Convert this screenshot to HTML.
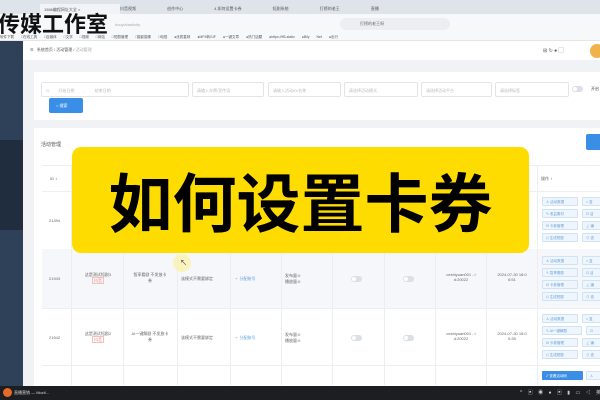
<!DOCTYPE html>
<html><head><meta charset="utf-8"><style>
*{margin:0;padding:0;box-sizing:border-box}
body{width:600px;height:400px;overflow:hidden;position:relative;background:#f0f2f5;font-family:"Liberation Sans","Noto Sans CJK SC",sans-serif;font-size:4px;color:#666}
.a{position:absolute}
.t{white-space:nowrap}
.inp{position:absolute;top:82px;height:15px;border:1px solid #e2e4e8;background:#fff;border-radius:2px;color:#bbb;font-size:4px;padding:5px 4px}
.btn{position:absolute;height:9px;border:1px solid #cfe3f6;background:#eef5fd;color:#6a9fd8;font-size:3.5px;padding:2px 3px;border-radius:1px}
.sw{position:absolute;width:11px;height:6px;border-radius:3px;background:#dcdfe6}
.sw:after{content:"";position:absolute;left:1px;top:1px;width:4px;height:4px;border-radius:50%;background:#fff}
.vl{position:absolute;top:165px;height:220px;width:1px;background:#eceef2}
</style></head><body>
<div class="a" style="left:0;top:0;width:600px;height:14px;background:#dfe3ea"></div>
<div class="a t" style="left:40px;top:4px;width:80px;height:10px;background:#f1f3f6;font-size:4px;color:#555;padding:3px 4px">1566编程网址大全 ×</div>
<div class="a t" style="left:120px;top:6px;font-size:4px;color:#555;word-spacing:30px">抖音视频 创作中心 4.如何设置卡券 短剧系统 打榜的老王 直播</div>
<div class="a" style="left:0;top:14px;width:600px;height:20px;background:#f7f8fa"></div>
<div class="a" style="left:340px;top:18px;width:110px;height:12px;background:#eceef1;border-radius:6px"></div>
<div class="a t" style="left:360px;top:21px;font-size:4px;color:#666">打榜的老王呀</div>
<div class="a t" style="left:115px;top:22px;font-size:4px;color:#aaa">douyin/activity</div>
<div class="a" style="left:0;top:34px;width:600px;height:7px;background:#f7f8fa;border-bottom:1px solid #e5e5e5"></div>
<div class="a t" style="left:0;top:35px;font-size:3.5px;color:#555;word-spacing:6px">软件下载 □在线工具 □自媒体 □文学 □视频 □网站 □短剧管理 □摄影摄像 □电视 ●优质星球 ●MP4转GIF ●一键文章 ●热门话题 ●https://ff3-static ●Bily Net ●出行</div>
<div class="a t" style="left:-2px;top:7px;font-size:22px;color:#111;font-weight:bold">传媒工作室</div>
<div class="a" style="left:0;top:41px;width:23px;height:346px;background:#2f4159"></div>
<div class="a" style="left:0;top:140px;width:23px;height:90px;background:#1f2d3f"></div>
<div class="a" style="left:23px;top:41px;width:577px;height:19px;background:#fff"></div>
<div class="a t" style="left:30px;top:47px;font-size:4px;color:#555">☰ &nbsp; 系统首页 / 活动管理 / <span style="color:#aaa">活动管理</span></div>
<div class="a t" style="left:543px;top:47px;font-size:5px;color:#555">⊞ ↻ ● ▢</div>
<div class="a" style="left:590px;top:44px;width:14px;height:14px;border-radius:50%;background:#f0b34a"></div>
<div class="a" style="left:34px;top:72px;width:570px;height:48px;background:#fff"></div>
<div class="inp t" style="left:41px;width:148px">◷ &nbsp;&nbsp;&nbsp;&nbsp;&nbsp;&nbsp; 开始日期 &nbsp;&nbsp;&nbsp;&nbsp;&nbsp;&nbsp; - &nbsp;&nbsp;&nbsp;&nbsp;&nbsp;&nbsp;&nbsp; 结束日期</div>
<div class="inp t" style="left:192px;width:72px">请输入车牌/宣传语</div>
<div class="inp t" style="left:268px;width:73px">请输入活动ID/名称</div>
<div class="inp t" style="left:344px;width:74px">请选择活动模式</div>
<div class="inp t" style="left:421px;width:71px">请选择活动平台</div>
<div class="inp t" style="left:495px;width:74px">请选择标签</div>
<div class="sw" style="left:572px;top:86px"></div>
<div class="a t" style="left:591px;top:86px;font-size:4px;color:#444">开启</div>
<div class="a t" style="left:49px;top:98px;width:34px;height:15px;background:#3a8ee6;border-radius:2px;color:#fff;font-size:4px;padding:5px 7px">○ 搜索</div>
<div class="a" style="left:34px;top:128px;width:570px;height:260px;background:#fff"></div>
<div class="a t" style="left:41px;top:141px;font-size:5px;color:#555">活动管理</div>
<div class="a" style="left:586px;top:134px;width:20px;height:16px;background:#3a8ee6;border-radius:2px"></div>
<div class="a" style="left:42px;top:165px;width:560px;height:1px;background:#eceef2"></div>
<div class="a" style="left:42px;top:191px;width:560px;height:1px;background:#eceef2"></div>
<div class="a" style="left:42px;top:249px;width:560px;height:59px;background:#f5f7fa"></div>
<div class="a" style="left:42px;top:308px;width:560px;height:1px;background:#eceef2"></div>
<div class="a" style="left:42px;top:365px;width:560px;height:1px;background:#eceef2"></div>
<div class="vl" style="left:71px"></div><div class="vl" style="left:123px"></div><div class="vl" style="left:177px"></div><div class="vl" style="left:230px"></div><div class="vl" style="left:281px"></div><div class="vl" style="left:332px"></div><div class="vl" style="left:384px"></div><div class="vl" style="left:435px"></div><div class="vl" style="left:486px"></div><div class="vl" style="left:537px"></div>
<div class="a t" style="left:50px;top:176px">ID ↕</div>
<div class="a t" style="left:541px;top:176px">操作 ↕</div>
<div class="a t" style="left:49px;top:218px">21494</div>
<div class="a t" style="left:49px;top:276px">21943</div>
<div class="a t" style="left:49px;top:335px">21942</div>
<div class="a" style="left:78px;top:272px;text-align:center;width:40px">这是测试短剧3<br><span style="color:#e88;border:1px solid #f3c0c0;padding:0 1px">抖音</span></div>
<div class="a" style="left:78px;top:331px;text-align:center;width:40px">这是测试短剧2<br><span style="color:#e88;border:1px solid #f3c0c0;padding:0 1px">抖音</span></div>
<div class="a" style="left:126px;top:272px;text-align:center;width:48px">智享看剧 不发放卡<br>券</div>
<div class="a" style="left:126px;top:331px;text-align:center;width:48px">AI一键解剧 不发放卡<br>券</div>
<div class="a t" style="left:181px;top:276px">该模式不需要绑定</div>
<div class="a t" style="left:181px;top:335px">该模式不需要绑定</div>
<div class="a t" style="left:235px;top:276px;color:#5a9ee0">+ &nbsp;分配账号</div>
<div class="a t" style="left:235px;top:335px;color:#5a9ee0">+ &nbsp;分配账号</div>
<div class="a" style="left:285px;top:273px">发布量:0<br>播放量:0</div>
<div class="a" style="left:285px;top:332px">发布量:0<br>播放量:0</div>
<div class="sw" style="left:351px;top:276px"></div><div class="sw" style="left:403px;top:276px"></div>
<div class="sw" style="left:351px;top:335px"></div><div class="sw" style="left:403px;top:335px"></div>
<div class="a" style="left:438px;top:272px;width:46px;text-align:center">ceshiyuan001 - i<br>d:20022</div>
<div class="a" style="left:438px;top:331px;width:46px;text-align:center">ceshiyuan001 - i<br>d:20022</div>
<div class="a" style="left:489px;top:272px;width:46px;text-align:center">2024-07-30 18:0<br>6:51</div>
<div class="a" style="left:489px;top:331px;width:46px;text-align:center">2024-07-30 18:0<br>5:35</div>
<div class="btn t" style="left:542px;top:197px;width:36px">♙ 活动数据</div><div class="btn t" style="left:582px;top:197px;width:20px">⌂ 复</div>
<div class="btn t" style="left:542px;top:209px;width:36px">✎ 收益素材</div><div class="btn t" style="left:582px;top:209px;width:20px">⊡ 活</div>
<div class="btn t" style="left:542px;top:221px;width:36px">⊟ 卡券管理</div><div class="btn t" style="left:582px;top:221px;width:20px">∠ 编</div>
<div class="btn t" style="left:542px;top:233px;width:36px">⎙ 生成短剧</div><div class="btn t" style="left:582px;top:233px;width:20px">⊙ 查</div>
<div class="btn t" style="left:542px;top:256px;width:36px">♙ 活动数据</div><div class="btn t" style="left:582px;top:256px;width:20px">⌂ 复</div>
<div class="btn t" style="left:542px;top:268px;width:36px">✎ 智享看剧</div><div class="btn t" style="left:582px;top:268px;width:20px">⊡ 活</div>
<div class="btn t" style="left:542px;top:280px;width:36px">⊟ 卡券管理</div><div class="btn t" style="left:582px;top:280px;width:20px">∠ 编</div>
<div class="btn t" style="left:542px;top:292px;width:36px">⎙ 生成短剧</div><div class="btn t" style="left:582px;top:292px;width:20px">⊙ 查</div>
<div class="btn t" style="left:542px;top:314px;width:36px">♙ 活动数据</div><div class="btn t" style="left:582px;top:314px;width:20px">⌂ 复</div>
<div class="btn t" style="left:542px;top:326px;width:40px">✎ AI一键解剧</div><div class="btn t" style="left:586px;top:326px;width:16px">⊡</div>
<div class="btn t" style="left:542px;top:338px;width:36px">⊟ 卡券管理</div><div class="btn t" style="left:582px;top:338px;width:20px">∠ 编</div>
<div class="btn t" style="left:542px;top:350px;width:36px">⎙ 生成短剧</div><div class="btn t" style="left:582px;top:350px;width:20px">⊙ 查</div>
<div class="btn t" style="left:542px;top:371px;width:41px;background:#3a8ee6;color:#fff;border-color:#3a8ee6">✓ 查看活动码</div>
<div class="btn t" style="left:586px;top:371px;width:16px">♙</div>
<div class="a" style="left:173px;top:254px;width:18px;height:18px;border-radius:50%;background:rgba(255,240,150,.6)"></div>
<div class="a t" style="left:180px;top:258px;font-size:7px;color:#333">↖</div>
<div class="a" style="left:72px;top:147px;width:457px;height:106px;background:#ffdc00;border-radius:9px"></div>
<div class="a t" style="left:72px;top:158px;width:457px;text-align:center;font-size:64px;line-height:84px;color:#000;font-family:'Noto Sans CJK SC',sans-serif;font-weight:bold">如何设置卡券</div>
<div class="a" style="left:0;top:386px;width:600px;height:14px;background:#1c1e22"></div>
<div class="a" style="left:3px;top:388px;width:9px;height:9px;border-radius:50%;background:#e86a2a"></div>
<div class="a t" style="left:14px;top:390px;font-size:4px;color:#ddd">直播营销 — Mozil...</div>
<div class="a t" style="left:520px;top:389px;font-size:5px;color:#ccc;letter-spacing:2px">^ ▣ ◉ ● ▣ ▮ ▭ ◁ 英</div>
</body></html>
